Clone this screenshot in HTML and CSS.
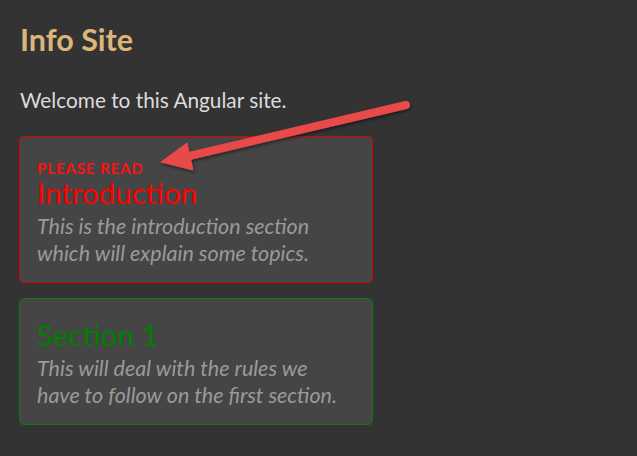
FILE: index.html
```html
<!DOCTYPE html>
<html>
<head>
<meta charset="utf-8">
<link rel="stylesheet" href="styles.css">
</head>
<body>
<div class="page">
  <h1 class="title">Info Site</h1>
  <p class="welcome">Welcome to this Angular site.</p>
  <div class="card card-red">
    <div class="eyebrow">PLEASE READ</div>
    <div class="card-title">Introduction</div>
    <div class="card-text">This is the introduction section<br>which will explain some topics.</div>
  </div>
  <div class="card card-green">
    <div class="card-title">Section 1</div>
    <div class="card-text">This will deal with the rules we<br>have to follow on the first section.</div>
  </div>
</div>
<svg class="arrow" width="637" height="456" viewBox="0 0 637 456">
  <defs>
    <filter id="sh" x="-20%" y="-20%" width="140%" height="140%">
      <feDropShadow dx="1" dy="2" stdDeviation="1.5" flood-color="#000" flood-opacity="0.45"/>
    </filter>
  </defs>
  <g filter="url(#sh)" fill="#e8484a" stroke="#e8484a">
    <line x1="406" y1="105" x2="185" y2="157" stroke-width="8" stroke-linecap="round"/>
    <polygon points="161,162 187,143 193,170" stroke-width="1" stroke-linejoin="round"/>
  </g>
</svg>
</body>
</html>
```
FILE: styles.css
```css
html, body {
  margin: 0;
  padding: 0;
  background: #333333;
}
body {
  font-family: Lato, "Open Sans", sans-serif;
  width: 637px;
  height: 456px;
  overflow: hidden;
  position: relative;
}
.page {
  padding: 20px 20px 0 20px;
}
.title {
  margin: 0;
  font-size: 30.5px;
  font-weight: 700;
  color: #ddb57a;
  line-height: 38px;
}
.welcome {
  margin: 30px 0 0 0;
  font-size: 20.8px;
  color: #dcdcdc;
  line-height: 24px;
}
.card {
  box-sizing: border-box;
  width: 354px;
  margin-left: -1px;
  background: #454545;
  border: 1px solid;
  border-radius: 5px;
  padding: 0 17px;
}
.card-red {
  margin-top: 24px;
  height: 147px;
  border-color: #e00000;
  padding-top: 24px;
}
.card-red .card-title {
  color: #ff0000;
  margin-top: 2px;
  line-height: 30px;
}
.card-red .card-text {
  margin-top: 5px;
}
.card-green {
  margin-top: 15px;
  height: 127px;
  border-color: #0a7d0a;
  padding-top: 20px;
}
.card-green .card-title {
  color: #008000;
}
.card-green .card-text {
  margin-top: 4px;
}
.eyebrow {
  color: #ff1010;
  font-weight: 700;
  font-size: 15px;
  line-height: 15px;
  letter-spacing: 0.9px;
}
.card-title {
  font-size: 29.5px;
  line-height: 32px;
}
.card-text {
  font-style: italic;
  font-size: 21.5px;
  line-height: 27px;
  color: #9a9a9a;
}
.arrow {
  position: absolute;
  left: 0;
  top: 0;
  pointer-events: none;
}
```
